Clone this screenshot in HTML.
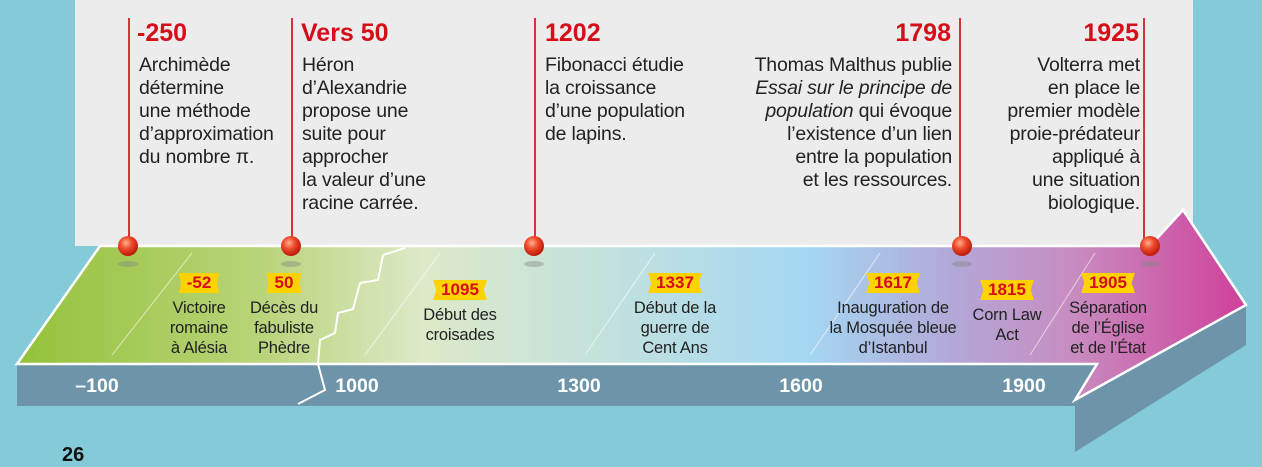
<!DOCTYPE html>
<html><head><meta charset="utf-8"><style>
*{margin:0;padding:0}
body{width:1262px;height:461px;background:#84cad9;position:relative;overflow:hidden;font-family:"Liberation Sans",sans-serif}
.panel{position:absolute;left:75px;top:-40px;width:1118px;height:286px;background:#ececec;border-radius:0 42px 0 0}
.t{position:absolute;color:#222;font-size:19.5px;line-height:23px;white-space:nowrap;letter-spacing:-0.2px}
.y{position:absolute;color:#d50e1a;font-weight:bold;font-size:25px;line-height:28px;white-space:nowrap}
.vl{position:absolute;top:18px;width:1.5px;height:228px;background:#d9333a}
.tag{position:absolute;transform:translateX(-50%);background:#ffd200;color:#d50e1a;font-weight:bold;font-size:17px;line-height:20px;padding:0 8px;clip-path:polygon(0 0,100% 0,94% 50%,100% 100%,0 100%,6% 50%)}
.d{position:absolute;transform:translateX(-50%);text-align:center;color:#222;font-size:16.5px;line-height:20px;white-space:nowrap;letter-spacing:-0.2px}
.ax{position:absolute;top:375px;color:#fff;font-weight:bold;font-size:19.5px;transform:translateX(-50%)}
</style></head><body>
<div class="panel"></div>
<svg width="1262" height="461" style="position:absolute;left:0;top:0">
<defs>
<linearGradient id="g" x1="0" x2="1" y1="0" y2="0">
<stop offset="0" stop-color="#94c23a"/>
<stop offset="0.2" stop-color="#b9d47a"/>
<stop offset="0.33" stop-color="#dde9c8"/>
<stop offset="0.5" stop-color="#bfe0e0"/>
<stop offset="0.64" stop-color="#a4d8f2"/>
<stop offset="0.76" stop-color="#b2a8d8"/>
<stop offset="0.86" stop-color="#c88cc0"/>
<stop offset="1" stop-color="#d0409a"/>
</linearGradient>
<radialGradient id="b2" cx="0.4" cy="0.35" r="0.6"><stop offset="0" stop-color="#ffb090"/><stop offset="0.5" stop-color="#ef4a2a"/><stop offset="1" stop-color="#c02010"/></radialGradient>
</defs>
<rect x="17" y="364" width="1080" height="42" fill="#6d94a8"/>
<polygon points="1075,400 1246,305 1246,345 1075,452" fill="#6d94a8"/>
<polygon points="17,364 100,246 1150,246 1183,210 1246,305 1075,400 1097,364" fill="url(#g)" stroke="#fff" stroke-width="2.5"/>
<polyline points="405,248 383,255 378,280 360,283 353,309 338,313 335,333 320,340 318,364 325,390 298,404" fill="none" stroke="#fff" stroke-width="2"/>
<g stroke="#fff" stroke-opacity="0.6" stroke-width="1"><line x1="112" y1="355" x2="192" y2="253"/><line x1="365" y1="355" x2="440" y2="253"/><line x1="585" y1="355" x2="655" y2="253"/><line x1="810" y1="355" x2="880" y2="253"/><line x1="1030" y1="355" x2="1095" y2="253"/></g>
<g fill="#888" fill-opacity="0.45"><ellipse cx="128" cy="264" rx="10" ry="3"/><ellipse cx="291" cy="264" rx="10" ry="3"/><ellipse cx="534" cy="264" rx="10" ry="3"/><ellipse cx="962" cy="264" rx="10" ry="3"/><ellipse cx="1150" cy="264" rx="10" ry="3"/></g>
</svg>
<div class="vl" style="left:128px"></div><div class="vl" style="left:291px"></div><div class="vl" style="left:534px"></div><div class="vl" style="left:959px"></div><div class="vl" style="left:1143px"></div>
<svg width="1262" height="461" style="position:absolute;left:0;top:0">
<defs><radialGradient id="b3" cx="0.4" cy="0.35" r="0.6"><stop offset="0" stop-color="#ffb090"/><stop offset="0.5" stop-color="#ef4a2a"/><stop offset="1" stop-color="#c02010"/></radialGradient></defs>
<g fill="url(#b3)"><circle cx="128" cy="246" r="10"/><circle cx="291" cy="246" r="10"/><circle cx="534" cy="246" r="10"/><circle cx="962" cy="246" r="10"/><circle cx="1150" cy="246" r="10"/></g></svg>

<div class="y" style="left:137px;top:19px">-250</div>
<div class="t" style="left:139px;top:54px">Archimède<br>détermine<br>une méthode<br>d’approximation<br>du nombre π.</div>
<div class="y" style="left:301px;top:19px">Vers 50</div>
<div class="t" style="left:302px;top:54px">Héron<br>d’Alexandrie<br>propose une<br>suite pour<br>approcher<br>la valeur d’une<br>racine carrée.</div>
<div class="y" style="left:545px;top:19px">1202</div>
<div class="t" style="left:545px;top:54px">Fibonacci étudie<br>la croissance<br>d’une population<br>de lapins.</div>
<div class="y" style="right:311px;top:19px">1798</div>
<div class="t" style="right:310px;top:54px;text-align:right">Thomas Malthus publie<br><i>Essai sur le principe de</i><br><i>population</i> qui évoque<br>l’existence d’un lien<br>entre la population<br>et les ressources.</div>
<div class="y" style="right:123px;top:19px">1925</div>
<div class="t" style="right:122px;top:54px;text-align:right">Volterra met<br>en place le<br>premier modèle<br>proie-prédateur<br>appliqué à<br>une situation<br>biologique.</div>

<div class="tag" style="left:199px;top:273px">-52</div><div class="d" style="left:199px;top:298px">Victoire<br>romaine<br>à Alésia</div>
<div class="tag" style="left:284px;top:273px">50</div><div class="d" style="left:284px;top:298px">Décès du<br>fabuliste<br>Phèdre</div>
<div class="tag" style="left:460px;top:280px">1095</div><div class="d" style="left:460px;top:305px">Début des<br>croisades</div>
<div class="tag" style="left:675px;top:273px">1337</div><div class="d" style="left:675px;top:298px">Début de la<br>guerre de<br>Cent Ans</div>
<div class="tag" style="left:893px;top:273px">1617</div><div class="d" style="left:893px;top:298px">Inauguration de<br>la Mosquée bleue<br>d’Istanbul</div>
<div class="tag" style="left:1007px;top:280px">1815</div><div class="d" style="left:1007px;top:305px">Corn Law<br>Act</div>
<div class="tag" style="left:1108px;top:273px">1905</div><div class="d" style="left:1108px;top:298px">Séparation<br>de l’Église<br>et de l’État</div>

<div class="ax" style="left:97px">–100</div>
<div class="ax" style="left:357px">1000</div>
<div class="ax" style="left:579px">1300</div>
<div class="ax" style="left:801px">1600</div>
<div class="ax" style="left:1024px">1900</div>
<div style="position:absolute;left:62px;top:444px;font-weight:bold;font-size:20px;color:#111">26</div>
</body></html>
